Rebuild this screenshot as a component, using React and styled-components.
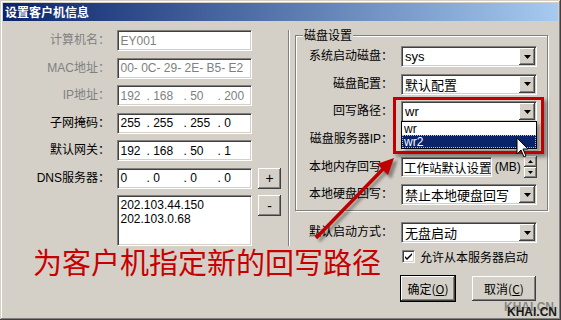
import styled, { createGlobalStyle } from 'styled-components';

const FONT = `"Liberation Sans", "Noto Sans CJK SC", sans-serif`;
const CJK = `"Noto Sans CJK SC", "Liberation Sans", sans-serif`;

const GlobalStyle = createGlobalStyle`
  html, body { margin: 0; padding: 0; background: #d4d0c8; }
  * { box-sizing: border-box; }
`;

const Window = styled.div`
  position: relative;
  width: 561px;
  height: 320px;
  padding: 3px;
  background: #d4d0c8;
  box-shadow: inset -1px -1px #404040, inset 1px 1px #d4d0c8,
    inset -2px -2px #808080, inset 2px 2px #fff;
  font: 12px ${CJK};
  color: #000;
  overflow: hidden;
`;

const TitleBar = styled.div`
  height: 18px;
  padding-left: 2px;
  background: linear-gradient(to right, #0a246a, #a6caf0);
  color: #fff;
  font-weight: bold;
  font-size: 12px;
  line-height: 18px;
`;

const Body = styled.div`
  display: flex;
  align-items: flex-start;
`;

const LeftPane = styled.div`
  display: grid;
  grid-template-columns: 107px 135px 23px;
  grid-template-rows: repeat(6, 21px) 51px;
  column-gap: 6.5px;
  row-gap: 6.5px;
  padding-top: 9px;
`;

const Label = styled.div`
  text-align: right;
  line-height: 21px;
  white-space: nowrap;
  font-family: ${FONT};
  color: ${(p) => (p.$disabled ? '#808080' : '#000')};
`;

const sunken = `
  background: #fff;
  border: 1px solid;
  border-color: #808080 #fff #fff #808080;
  box-shadow: inset 1px 1px #404040, inset -1px -1px #d4d0c8;
`;

const raised = `
  background: #d4d0c8;
  box-shadow: inset -1px -1px #404040, inset 1px 1px #fff,
    inset -2px -2px #808080, inset 2px 2px #d4d0c8;
`;

const Field = styled.div`
  ${sunken}
  display: flex;
  align-items: center;
  height: ${(p) => p.$h || 21}px;
  padding: 0 3px;
  font: 12px ${FONT};
  white-space: pre;
  overflow: hidden;
  color: ${(p) => (p.$disabled ? '#808080' : '#000')};
`;

const MemField = styled(Field)`
  width: 96px;
  padding: 0 2px;
  font: 12.5px ${CJK};
`;

const IpSeg = styled.span`
  width: ${(p) => p.$w}px;
  flex: none;
`;

const ListBox = styled.div`
  ${sunken}
  grid-column: 2;
  padding: 2px 3px;
  font: 12px ${FONT};
  line-height: 14px;
`;

const SmallButton = styled.div`
  ${raised}
  width: 23px;
  height: 21px;
  display: flex;
  align-items: center;
  justify-content: center;
  font: 14px ${FONT};
`;

const Separator = styled.div`
  width: 2px;
  height: 216px;
  margin: 9px 0 0 7px;
  border-left: 1px solid #808080;
  border-right: 1px solid #fff;
`;

const RightPane = styled.div`
  margin-left: 5px;
  padding-top: 14px;
`;

const Group = styled.div`
  position: relative;
  width: 253px;
  height: 176px;
  border: 1px solid #808080;
  box-shadow: inset 1px 1px #fff, 1px 1px #fff;
  padding-top: 10px;
`;

const GroupTitle = styled.span`
  position: absolute;
  top: -8px;
  left: 7px;
  padding: 0 1px;
  background: #d4d0c8;
  line-height: 14px;
`;

const FormGrid = styled.div`
  display: grid;
  grid-template-columns: ${(p) => p.$label}px 136px;
  column-gap: 8px;
  grid-auto-rows: 21px;
  row-gap: 6.7px;
`;

const ComboBox = styled.div`
  ${sunken}
  position: relative;
  display: flex;
  align-items: center;
  height: 21px;
  padding: 0 1px 0 3px;
  font: 13px ${CJK};
`;

const ComboText = styled.span`
  flex: 1;
  font-family: ${FONT};
`;

const DropBtn = styled.div`
  ${raised}
  width: 16px;
  height: 17px;
  display: flex;
  align-items: center;
  justify-content: center;
`;

const DropList = styled.div`
  position: absolute;
  top: 19px;
  left: -1px;
  right: -1px;
  z-index: 3;
  background: #fff;
  border: 1px solid #000;
  box-shadow: 3px 3px 4px rgba(0, 0, 0, 0.35);
`;

const DropItem = styled.div`
  height: 13px;
  line-height: 13px;
  padding-left: 2px;
  font: 12px ${FONT};
  background: ${(p) => (p.$selected ? '#0a246a' : '#fff')};
  color: ${(p) => (p.$selected ? '#fff' : '#000')};
  outline: ${(p) => (p.$selected ? '1px dotted #d8c070' : 'none')};
  outline-offset: -1px;
`;

const MemRow = styled.div`
  display: flex;
  align-items: center;
  gap: 3px;
`;

const Unit = styled.span`
  font: 12px ${FONT};
  color: #000;
`;

const Spinner = styled.div`
  display: flex;
  flex-direction: column;
  width: 14px;
  height: 22px;
  margin-left: auto;
`;

const SpinBtn = styled.div`
  ${raised}
  flex: 1;
  display: flex;
  align-items: center;
  justify-content: center;
`;

const Below = styled.div`
  margin-top: 11px;
  display: flex;
  flex-direction: column;
  gap: 6px;
`;

const CheckRow = styled.label`
  display: flex;
  align-items: center;
  gap: 5px;
  margin-left: 107px;
  height: 14px;
`;

const CheckBox = styled.span`
  ${sunken}
  width: 13px;
  height: 13px;
  display: flex;
  align-items: center;
  justify-content: center;
`;

const ButtonRow = styled.div`
  display: flex;
  gap: 17px;
  margin: 13px 0 0 106px;
`;

const PushButton = styled.div`
  ${raised}
  width: ${(p) => p.$w}px;
  height: 25px;
  display: flex;
  align-items: center;
  justify-content: center;
  outline: ${(p) => (p.$default ? '1px solid #000' : 'none')};
  u { text-decoration: underline; }
`;

const Callout = styled.div`
  position: absolute;
  left: 393px;
  top: 97px;
  width: 151px;
  height: 57px;
  border: 3px solid #c00000;
  box-shadow: 3px 3px 4px rgba(0, 0, 0, 0.4);
  z-index: 4;
  pointer-events: none;
`;

const Overlay = styled.svg`
  position: absolute;
  left: 0;
  top: 0;
  z-index: 6;
  pointer-events: none;
`;

const Caption = styled.div`
  position: absolute;
  left: 33px;
  top: 247px;
  font: 29px ${CJK};
  line-height: 29px;
  color: #c80000;
  white-space: nowrap;
`;

const Watermark = styled.div`
  position: absolute;
  right: 4px;
  bottom: 3px;
  font: bold 12px ${FONT};
  line-height: 10px;
  color: #1a1a1a;
  text-shadow: -3px -5px 0 rgba(70, 70, 70, 0.55);
  z-index: 7;
`;

const Arrow = () => (
  <svg width="7" height="4" viewBox="0 0 7 4">
    <path d="M0 0h7L3.5 4z" fill="#000" />
  </svg>
);

const SpinArrow = ({ up }) => (
  <svg width="5" height="3" viewBox="0 0 5 3">
    <path d={up ? 'M0 3h5L2.5 0z' : 'M0 0h5L2.5 3z'} fill="#000" />
  </svg>
);

const Combo = ({ value, children }) => (
  <ComboBox>
    <ComboText>{value}</ComboText>
    <DropBtn>
      <Arrow />
    </DropBtn>
    {children}
  </ComboBox>
);

const IpField = ({ parts, disabled }) => (
  <Field $disabled={disabled}>
    {parts.map((p, i) => (
      <IpSeg key={i} $w={[26, 37, 34, 30][i]}>
        {i === 0 ? p : `. ${p}`}
      </IpSeg>
    ))}
  </Field>
);

export default function App() {
  return (
    <Window>
      <GlobalStyle />
      <TitleBar>设置客户机信息</TitleBar>
      <Body>
        <LeftPane>
          <Label $disabled>计算机名：</Label>
          <Field $disabled>EY001</Field>
          <span />
          <Label $disabled>MAC地址：</Label>
          <Field $disabled>00- 0C- 29- 2E- B5- E2</Field>
          <span />
          <Label $disabled>IP地址：</Label>
          <IpField disabled parts={['192', '168', '50', '200']} />
          <span />
          <Label>子网掩码：</Label>
          <IpField parts={['255', '255', '255', '0']} />
          <span />
          <Label>默认网关：</Label>
          <IpField parts={['192', '168', '50', '1']} />
          <span />
          <Label>DNS服务器：</Label>
          <IpField parts={['0', '0', '0', '0']} />
          <SmallButton>+</SmallButton>
          <span />
          <ListBox>
            202.103.44.150
            <br />
            202.103.0.68
          </ListBox>
          <SmallButton>-</SmallButton>
        </LeftPane>
        <Separator />
        <RightPane>
          <Group>
            <GroupTitle>磁盘设置</GroupTitle>
            <FormGrid $label={97}>
              <Label>系统启动磁盘：</Label>
              <Combo value="sys" />
              <Label>磁盘配置：</Label>
              <Combo value="默认配置" />
              <Label>回写路径：</Label>
              <Combo value="wr">
                <DropList>
                  <DropItem>wr</DropItem>
                  <DropItem $selected>wr2</DropItem>
                </DropList>
              </Combo>
              <Label>磁盘服务器IP：</Label>
              <Combo value="" />
              <Label>本地内存回写：</Label>
              <MemRow>
                <MemField $h={20}>工作站默认设置</MemField>
                <Unit>(MB)</Unit>
                <Spinner>
                  <SpinBtn>
                    <SpinArrow up />
                  </SpinBtn>
                  <SpinBtn>
                    <SpinArrow />
                  </SpinBtn>
                </Spinner>
              </MemRow>
              <Label>本地硬盘回写：</Label>
              <Combo value="禁止本地硬盘回写" />
            </FormGrid>
          </Group>
          <Below>
            <FormGrid $label={98}>
              <Label>默认启动方式：</Label>
              <Combo value="无盘启动" />
            </FormGrid>
            <CheckRow>
              <CheckBox>
                <svg width="7" height="7" viewBox="0 0 7 7">
                  <path d="M0 3l2 2 5-5v2l-5 5-2-2z" fill="#000" />
                </svg>
              </CheckBox>
              允许从本服务器启动
            </CheckRow>
          </Below>
          <ButtonRow>
            <PushButton $w={54} $default>
              确定(<u>O</u>)
            </PushButton>
            <PushButton $w={64}>
              取消(<u>C</u>)
            </PushButton>
          </ButtonRow>
        </RightPane>
      </Body>

      <Callout />
      <Caption>为客户机指定新的回写路径</Caption>
      <Overlay width="561" height="320" viewBox="0 0 561 320">
        <defs>
          <filter id="blur" x="-20%" y="-20%" width="140%" height="140%">
            <feGaussianBlur stdDeviation="1.5" />
          </filter>
        </defs>
        <g fill="rgba(0,0,0,0.35)" stroke="rgba(0,0,0,0.35)" filter="url(#blur)" transform="translate(3 3)">
          <line x1="316" y1="238" x2="384" y2="168" strokeWidth="3.5" />
          <polygon points="394,158 388,175 377,164" />
        </g>
        <line x1="316" y1="238" x2="384" y2="168" stroke="#c00000" strokeWidth="3.5" />
        <polygon points="394,158 388,175 377,164" fill="#c00000" />
        <g transform="translate(517 138)">
          <path d="M0 0v16l4-4 3 7 2-1-3-7h5z" fill="#fff" stroke="#000" strokeWidth="1" />
        </g>
      </Overlay>
      <Watermark>KHAI.CN</Watermark>
    </Window>
  );
}
